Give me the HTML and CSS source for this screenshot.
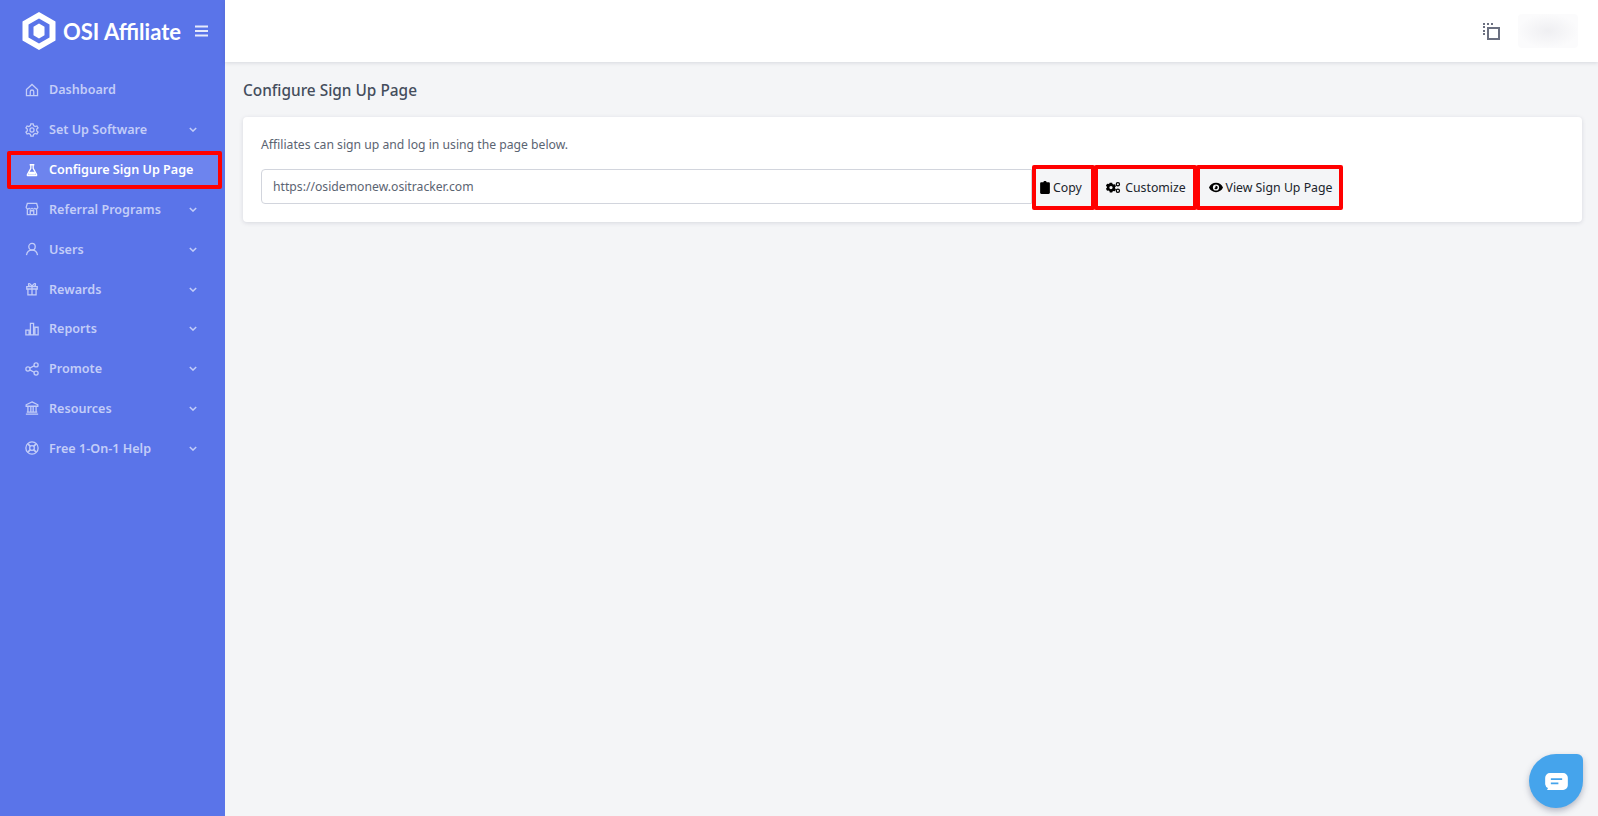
FILE: index.html
```html
<!DOCTYPE html>
<html lang="en">
<head>
<meta charset="utf-8">
<title>Configure Sign Up Page</title>
<link rel="stylesheet" href="styles.css">
</head>
<body>
<aside class="sidebar">
  <div class="brand">
    <svg class="logo" viewBox="0 0 34 38"><path fill="#fff" fill-rule="evenodd" d="M17 0 33.500 9.500v19L17 38 .5 28.500v-19zM17 6.500 6.500 12.600v12.800L17 31.500l10.500-6.100V12.600z"/><path fill="#fff" d="M17 11.500 22.500 14.700v8.600L17 26.500l-5.500-3.200v-8.600z"/></svg>
    <span class="brand-name">OSI Affiliate</span>
    <svg class="burger" viewBox="0 0 13 12"><path d="M0 1.500h13M0 6h13M0 10.500h13" stroke="#fff" stroke-width="2" opacity=".85"/></svg>
  </div>
  <nav class="nav">
    <a class="item"><svg class="ico" viewBox="0 0 24 24"><path d="M2.500 11 12 2.500l9.500 8.500v10.500h-19zM9 21.500V15a3 3 0 0 1 6 0v6.500"/></svg><span class="label">Dashboard</span></a>
    <a class="item"><svg class="ico" viewBox="0 0 24 24"><circle cx="12" cy="12" r="3.500"/><path d="M10 1.500h4l.7 3 2.700 1.500 3-1 2 3.500-2.300 2v3l2.300 2-2 3.500-3-1-2.700 1.500-.7 3h-4l-.7-3-2.700-1.500-3 1-2-3.500 2.300-2v-3l-2.300-2 2-3.500 3 1L9.300 4.500z"/></svg><span class="label">Set Up Software</span><svg class="chev" viewBox="0 0 10 6"><path d="M1 1l4 4 4-4"/></svg></a>
    <a class="item active"><svg class="ico" viewBox="0 0 24 24"><path d="M8 3h8M10 3v6L4 20a1 1 0 0 0 1 1.500h14A1 1 0 0 0 20 20L14 9V3"/><path class="solid" d="M7.500 15h9l2.200 5H5.300z"/></svg><span class="label">Configure Sign Up Page</span></a>
    <a class="item"><svg class="ico" viewBox="0 0 24 24"><path d="M4 2.500h16l2 6.500a3 3 0 0 1-5 2 3.500 3.500 0 0 1-5 0 3.500 3.500 0 0 1-5 0 3 3 0 0 1-5-2zM4 12v9.500h16V12M9 21.500V15h6v6.500"/></svg><span class="label">Referral Programs</span><svg class="chev" viewBox="0 0 10 6"><path d="M1 1l4 4 4-4"/></svg></a>
    <a class="item"><svg class="ico" viewBox="0 0 24 24"><circle cx="12" cy="8" r="5.500"/><path d="M2.500 22.500c1-5.500 4.500-8.500 9.500-8.500s8.500 3 9.500 8.500"/></svg><span class="label">Users</span><svg class="chev" viewBox="0 0 10 6"><path d="M1 1l4 4 4-4"/></svg></a>
    <a class="item"><svg class="ico" viewBox="0 0 24 24"><path d="M3 8h18v4H3zM5 12v10h14V12M12 8v14M12 8C10 3 6 1 6 4.500 6 7 9 8 12 8c3 0 6-1 6-3.500C18 1 14 3 12 8"/></svg><span class="label">Rewards</span><svg class="chev" viewBox="0 0 10 6"><path d="M1 1l4 4 4-4"/></svg></a>
    <a class="item"><svg class="ico" viewBox="0 0 24 24"><path d="M1.500 14h5.500v8H1.500zM9.300 2.500h5.400V22H9.300zM17 9h5.500v13H17z"/></svg><span class="label">Reports</span><svg class="chev" viewBox="0 0 10 6"><path d="M1 1l4 4 4-4"/></svg></a>
    <a class="item"><svg class="ico" viewBox="0 0 24 24"><circle cx="5" cy="12" r="3.500"/><circle cx="19" cy="5" r="3.500"/><circle cx="19" cy="19" r="3.500"/><path d="M8.200 10.500l7.600-4M8.200 13.500l7.600 4"/></svg><span class="label">Promote</span><svg class="chev" viewBox="0 0 10 6"><path d="M1 1l4 4 4-4"/></svg></a>
    <a class="item"><svg class="ico" viewBox="0 0 24 24"><path d="M12 1.500 22 6.500V9H2V6.500zM5 9v10M10 9v10M14 9v10M19 9v10M3 19h18M1.500 22.500h21"/></svg><span class="label">Resources</span><svg class="chev" viewBox="0 0 10 6"><path d="M1 1l4 4 4-4"/></svg></a>
    <a class="item"><svg class="ico" viewBox="0 0 24 24"><circle cx="12" cy="12" r="10.500"/><circle cx="12" cy="12" r="4"/><path class="thick" d="M4.900 4.900l4.300 4.300M14.800 14.800l4.300 4.300M19.100 4.900l-4.300 4.300M9.200 14.800l-4.300 4.300"/></svg><span class="label">Free 1-On-1 Help</span><svg class="chev" viewBox="0 0 10 6"><path d="M1 1l4 4 4-4"/></svg></a>
  </nav>
</aside>
<div class="main">
  <header class="topbar">
    <svg class="toggle" viewBox="0 0 17 17"><path class="dash" d="M0 1h2M4 1h2M8 1h2M1 3v2M1 7v2M0 11h2"/><path class="box" d="M5 5h11v11H5z"/></svg>
    <div class="avatar"></div>
  </header>
  <main class="content">
    <h1 class="title">Configure Sign Up Page</h1>
    <section class="card">
      <p class="hint">Affiliates can sign up and log in using the page below.</p>
      <div class="row">
        <div class="url">https://osidemonew.ositracker.com</div>
        <button class="btn btn-copy"><svg class="bi" viewBox="0 0 12 16"><path d="M4 1.500C4 .7 5 0 6 0s2 .7 2 1.500h2.500c.8 0 1.500.7 1.500 1.500v11.500c0 .8-.7 1.500-1.500 1.500h-9C.7 16 0 15.300 0 14.500V3c0-.8.7-1.500 1.500-1.500z"/></svg>Copy</button>
        <button class="btn btn-custom"><svg class="bi wide" viewBox="0 0 18 16"><path fill-rule="evenodd" d="M5 2h3l.4 1.700 1.300.7 1.600-.5 1.400 2.500-1.200 1.200v1.400l1.200 1.200-1.400 2.500-1.600-.5-1.300.7L8 14H5l-.4-1.700-1.300-.7-1.600.5L.3 9.600 1.500 8.400V7L.3 5.800l1.400-2.500 1.600.5 1.300-.7zM6.500 6a2 2 0 1 0 0 4 2 2 0 0 0 0-4z"/><circle cx="15" cy="4" r="2" fill="none" stroke="#000" stroke-width="1.500"/><circle cx="15" cy="12" r="2" fill="none" stroke="#000" stroke-width="1.500"/></svg>Customize</button>
        <button class="btn btn-view"><svg class="bi eye" viewBox="0 0 18 12"><path fill-rule="evenodd" d="M9 0c4 0 7.500 2.500 9 6-1.500 3.500-5 6-9 6S1.500 9.500 0 6c1.500-3.500 5-6 9-6zm0 2a4 4 0 1 0 0 8 4 4 0 0 0 0-8zm0 1.800a2.200 2.200 0 1 1-2.100 2.800c.9.300 1.900-.7 1.500-2.700z"/></svg>View Sign Up Page</button>
      </div>
    </section>
  </main>
</div>
<div class="chat"><svg viewBox="0 0 24 18"><path fill="#fff" d="M5 0h14a5 5 0 0 1 5 5v8a5 5 0 0 1-5 5H2l1-2a5 5 0 0 1-3-4V5a5 5 0 0 1 5-5z"/><path d="M6 6.500h12M6 11h8" stroke="#45a4ec" stroke-width="1.800"/></svg></div>
</body>
</html>
```

FILE: styles.css
```css
* { box-sizing: border-box; }
html, body { height: 100%; }
body {
  margin: 0;
  display: flex;
  height: 816px;
  overflow: hidden;
  background: #f4f5f7;
  font-family: "Noto Sans", "Open Sans", sans-serif;
  color: #4b5563;
}
.sidebar {
  flex: 0 0 225px;
  width: 225px;
  min-width: 0;
  background: #5a74e9;
  display: flex;
  flex-direction: column;
}
.brand {
  display: flex;
  align-items: center;
  height: 62px;
  padding: 0 17px 0 22px;
}
.logo { width: 34px; height: 38px; flex: none; }
.brand-name {
  margin-left: 7px;
  font-family: "Lato", sans-serif;
  font-size: 22px;
  font-weight: 700;
  color: #fff;
  white-space: nowrap;
}
.burger { width: 13px; height: 12px; margin-left: auto; flex: none; }
.nav { display: flex; flex-direction: column; padding: 8px 3px 0 7px; }
.item {
  display: flex;
  align-items: center;
  height: 39.800px;
  padding: 0 25px 0 18px;
  color: #c3cdf8;
  font-size: 12.600px;
  font-weight: 600;
}
.item.active {
  height: 38px;
  margin: 1px 0;
  padding-left: 14px;
  border: 4px solid #f00;
  border-radius: 2px;
  background: #6d84ee;
  color: #fff;
}
.ico {
  width: 14px;
  height: 14px;
  flex: none;
  fill: none;
  stroke: currentColor;
  stroke-width: 2.200;
}
.ico .solid { fill: currentColor; stroke: none; }
.ico .thick { stroke-width: 3; }
.label { margin-left: 10px; white-space: nowrap; }
.chev {
  width: 8px;
  height: 5px;
  margin-left: auto;
  fill: none;
  stroke: #c3cdf8;
  stroke-width: 1.800;
}
.main { flex: 1; min-width: 0; display: flex; flex-direction: column; }
.topbar {
  flex: 0 0 62px;
  display: flex;
  align-items: center;
  justify-content: flex-end;
  gap: 18px;
  padding: 0 20px 0 0;
  background: #fff;
  box-shadow: 0 1px 4px rgba(60, 70, 100, .16);
}
.toggle { width: 17px; height: 17px; fill: none; stroke-width: 2; }
.toggle .dash { stroke: #6b7080; }
.toggle .box { stroke: #6b7080; }
.avatar {
  width: 60px;
  height: 34px;
  border-radius: 4px;
  background: radial-gradient(closest-side, #efeff2, #fbfbfc);
}
.content { padding: 19px 16px 0 18px; }
.title {
  margin: 0 0 16px;
  font-size: 15.400px;
  line-height: 20px;
  font-weight: 500;
  color: #444d5c;
}
.card {
  height: 105px;
  padding: 19px 18px 0;
  background: #fff;
  border-radius: 4px;
  box-shadow: 0 1px 4px rgba(60, 70, 100, .16);
}
.hint { margin: 0 0 12px; font-size: 12.200px; line-height: 17px; color: #5b6472; }
.row { display: flex; align-items: flex-start; height: 45px; }
.url {
  width: 771px;
  height: 35px;
  margin-top: 4px;
  padding: 0 11px;
  border: 1px solid #d2d5dd;
  border-radius: 4px 0 0 4px;
  font-size: 12.200px;
  line-height: 33px;
  color: #5b6472;
}
.btn {
  display: flex;
  align-items: center;
  justify-content: center;
  height: 45px;
  padding: 0;
  border: 4px solid #f00;
  border-radius: 2px;
  background: #f4f5f7;
  color: #20242c;
  font-family: inherit;
  font-size: 12.300px;
}
.btn-copy { width: 63px; padding-right: 5px; }
.btn-custom { width: 103px; margin-left: -1px; }
.btn-view { width: 147px; margin-left: -1px; padding-left: 2px; }
.bi { width: 10px; height: 13px; margin-right: 3px; flex: none; fill: #000; }
.bi.wide { width: 16px; margin-right: 4px; }
.bi.eye { width: 14px; margin-right: 3px; }
.chat {
  position: fixed;
  right: 15px;
  bottom: 8px;
  width: 54px;
  height: 54px;
  display: flex;
  align-items: center;
  justify-content: center;
  background: #45a4ec;
  border-radius: 50% 6px 50% 50%;
  box-shadow: 0 3px 6px rgba(60, 70, 100, .35);
}
.chat svg { width: 23px; height: 17px; }
```
